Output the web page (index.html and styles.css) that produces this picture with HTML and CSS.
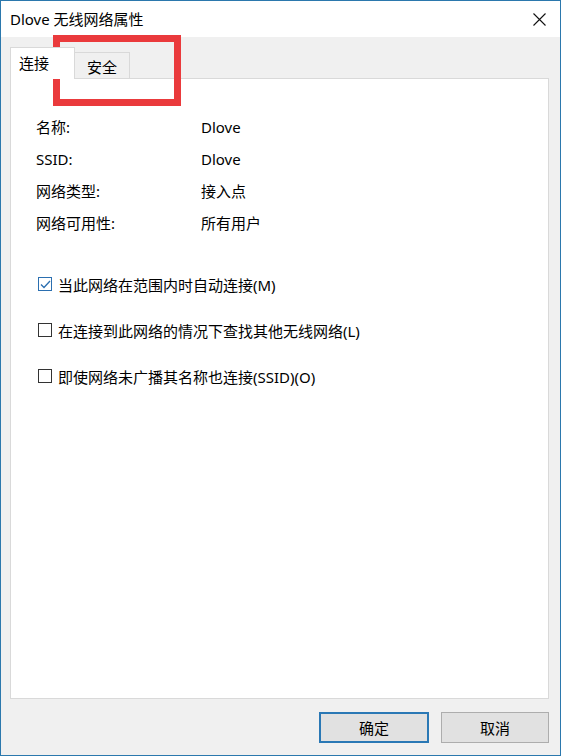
FILE: index.html
```html
<!DOCTYPE html>
<html>
<head>
<meta charset="utf-8">
<link rel="stylesheet" href="styles.css">
</head>
<body>
<div class="window">
  <div class="titlebar">
    <span class="title">Dlove 无线网络属性</span>
    <svg class="close" width="13" height="13" viewBox="0 0 13 13"><path d="M0.5 0.5 L12.5 12.5 M12.5 0.5 L0.5 12.5" stroke="#111" stroke-width="1.1" fill="none"/></svg>
  </div>
  <div class="body">
    <div class="tabs">
      <div class="tab active">连接</div>
      <div class="tab">安全</div>
    </div>
    <div class="panel">
      <div class="info">
        <div class="row"><span class="label">名称:</span><span class="value">Dlove</span></div>
        <div class="row"><span class="label">SSID:</span><span class="value">Dlove</span></div>
        <div class="row"><span class="label">网络类型:</span><span class="value">接入点</span></div>
        <div class="row"><span class="label">网络可用性:</span><span class="value">所有用户</span></div>
      </div>
      <div class="checks">
        <div class="check"><span class="box checked"><svg width="11" height="9" viewBox="0 0 11 9"><path d="M1 4.5 L4 7.5 L10 1" stroke="#2b6fb0" stroke-width="1.3" fill="none"/></svg></span><span>当此网络在范围内时自动连接(M)</span></div>
        <div class="check"><span class="box"></span><span>在连接到此网络的情况下查找其他无线网络(L)</span></div>
        <div class="check"><span class="box"></span><span>即使网络未广播其名称也连接(SSID)(O)</span></div>
      </div>
    </div>
    <div class="buttons">
      <div class="btn default">确定</div>
      <div class="btn">取消</div>
    </div>
  </div>
  <div class="highlight"></div>
</div>
</body>
</html>
```

FILE: styles.css
```css
* { box-sizing: border-box; }
html, body { margin: 0; padding: 0; background: #fff; }
body {
  font-family: "Noto Sans", "Noto Sans CJK SC", sans-serif;
  font-size: 15px;
  color: #000;
}
.window {
  position: relative;
  width: 561px;
  height: 756px;
  border: 1px solid #2b78ad;
  display: flex;
  flex-direction: column;
  background: #f0f0f0;
}
.titlebar {
  height: 36px;
  background: #fff;
  display: flex;
  align-items: center;
  justify-content: space-between;
  padding: 0 14px 0 9px;
}
.title { font-size: 15px; line-height: 36px; }
.close { display: block; }
.body {
  flex: 1;
  display: flex;
  flex-direction: column;
  padding: 10px 11px 0 9px;
}
.tabs {
  display: flex;
  align-items: flex-end;
  height: 31px;
}
.tab {
  width: 55px;
  height: 26px;
  border: 1px solid #d9d9d9;
  border-bottom: none;
  background: #f0f0f0;
  font-size: 15px;
  display: flex;
  align-items: center;
  justify-content: center;
  padding-top: 1px;
}
.tab.active {
  width: 65px;
  height: 32px;
  margin-bottom: -1px;
  background: #fff;
  position: relative;
  z-index: 1;
  border-right: 1px solid #d9d9d9;
  justify-content: flex-start;
  padding-left: 8px;
  padding-bottom: 4px;
}
.tab + .tab { border-left: none; }
.panel {
  height: 621px;
  background: #fff;
  border: 1px solid #d9d9d9;
  padding: 37px 20px 0 25px;
}
.info { display: flex; flex-direction: column; gap: 10px; }
.row { display: flex; line-height: 22px; height: 22px; }
.label { width: 165px; }
.checks {
  margin-top: 39px;
  display: flex;
  flex-direction: column;
  gap: 24px;
  padding-left: 2px;
}
.check { display: flex; align-items: center; height: 22px; gap: 6px; }
.box {
  width: 14px;
  height: 14px;
  border: 1px solid #333;
  background: #fff;
  display: flex;
  align-items: center;
  justify-content: center;
}
.box.checked { border-color: #2b6fb0; }
.buttons {
  margin-top: 13px;
  display: flex;
  justify-content: flex-end;
  gap: 12px;
}
.btn {
  width: 108px;
  height: 31px;
  border: 1px solid #adadad;
  background: #e1e1e1;
  display: flex;
  align-items: center;
  justify-content: center;
  font-size: 15px;
}
.btn.default {
  width: 110px;
  border: 2px solid #2a78b5;
}
.highlight {
  position: absolute;
  left: 52px;
  top: 34px;
  width: 128px;
  height: 71px;
  border: 7px solid #ea3a3c;
}
```
